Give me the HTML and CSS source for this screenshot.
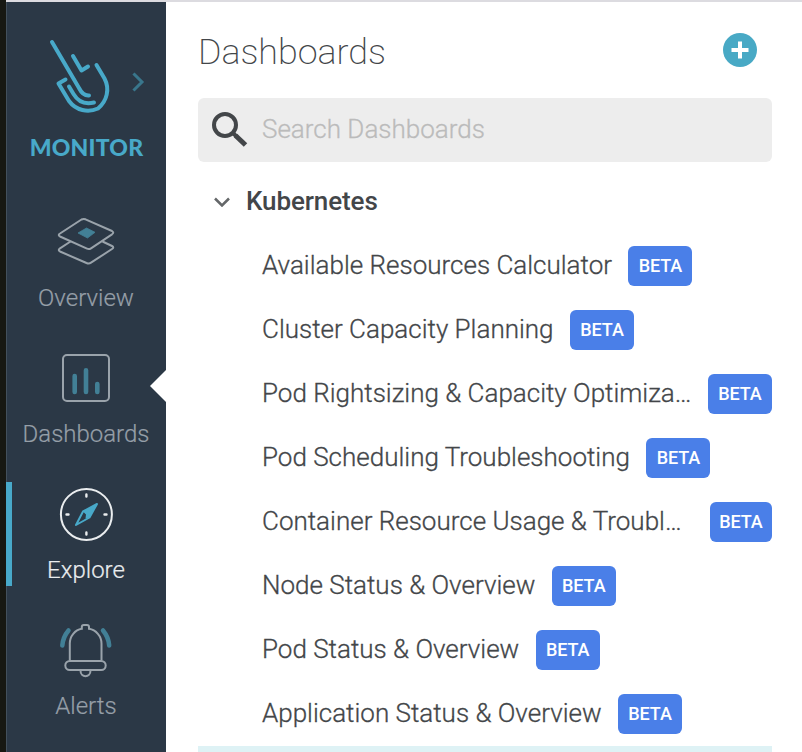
FILE: index.html
```html
<!DOCTYPE html>
<html lang="en">
<head>
<meta charset="utf-8">
<title>Dashboards</title>
<link rel="stylesheet" href="styles.css">
</head>
<body>
<div class="app">
  <nav class="sidebar">
    <div class="brand">
      <svg class="brand-art" width="159" height="134" viewBox="7 2 159 134" fill="none" stroke-linecap="round" stroke-linejoin="round">
        <g stroke="#48a9c9" stroke-width="4">
          <path d="M52 42 L79 88 Q83 96 89 95.500"/>
          <path d="M73 56 L81.500 70.500 L88 66.500"/>
          <path d="M96.500 65 L104.500 78.500 C110 89 107 101 98 108.500 C88 113 76 110.500 69 101 L58.500 83.500 L65.500 79.500"/>
          <path d="M69 86.500 L73.500 94 C78 101.500 84 105 94 102.500"/>
        </g>
        <path d="M134.500 74.500 L142 82 L134.500 89.500" stroke="#39768c" stroke-width="3" stroke-linecap="square" stroke-linejoin="miter"/>
      </svg>
      <span class="brand-name">MONITOR</span>
    </div>
    <a class="nav-item">
      <svg width="60" height="64" viewBox="56 210 60 64" fill="none" stroke="#9aa3ab" stroke-width="2" stroke-linejoin="round">
        <path d="M60 233.500 L81.500 219.500 Q83.500 218.500 85.500 219.300 L112 231 Q114.500 232.500 112 234.300 L91 248.300 Q89 249.600 87 248.700 L60 236.500 Q57.500 235 60 233.500Z"/>
        <path d="M70.500 241.500 L60 248.300 Q57.500 250 60 251.500 L86.500 263 Q89 264 91 262.700 L112 249 Q114.500 247.300 112 246 L102.500 241.500"/>
        <path d="M78 233 L86.500 228 L95 232.300 L87.500 238Z" fill="#428096" stroke="#428096" stroke-width=".8"/>
      </svg>
      <span>Overview</span>
    </a>
    <a class="nav-item nav-current">
      <svg width="60" height="64" viewBox="56 346 60 64" fill="none">
        <rect x="63" y="355" width="46" height="46" rx="4" stroke="#9aa3ab" stroke-width="2"/>
        <path d="M74.700 376V392M86 370.300V392M97.300 384V392" stroke="#428096" stroke-width="4.600" stroke-linecap="round"/>
      </svg>
      <span>Dashboards</span>
    </a>
    <a class="nav-item nav-active">
      <svg width="60" height="64" viewBox="56 482 60 64" fill="none">
        <circle cx="86.400" cy="514.400" r="25.500" stroke="#eaedef" stroke-width="2"/>
        <path d="M86.400 494.500V496.500M86.400 532.500V534.500M66.500 514.500H68.500M104.500 514.500H106.500" stroke="#eaedef" stroke-width="2.400" stroke-linecap="round"/>
        <path d="M97 504 L83 511.500 L76 525 L89.500 517.500Z" stroke="#48a9c9" stroke-width="2" stroke-linejoin="round"/>
        <path d="M97 504 L83 511.500 L86 514.500 L85.500 518.500 L89.500 517.500Z" fill="#48a9c9"/>
      </svg>
      <span>Explore</span>
    </a>
    <a class="nav-item">
      <svg width="60" height="64" viewBox="56 618 60 64" fill="none" stroke="#9aa3ab" stroke-width="2">
        <path d="M69.800 660.500V643.500C69.800 636 75 630 81.800 628.800V627Q81.800 625 83.800 625H87Q89 625 89 627V628.800C96 630 101.500 636 101.500 643.500V660.500"/>
        <rect x="65.300" y="661" width="40.400" height="9" rx="4.500"/>
        <path d="M80.500 670.500C80.500 678 90.500 678 90.500 670.500"/>
        <path d="M68.500 630.500Q63 637 62.300 645.500M103 630.500Q108.500 637 109.200 645.500" stroke="#428096" stroke-width="4.500" stroke-linecap="round"/>
      </svg>
      <span>Alerts</span>
    </a>
  </nav>
  <main class="panel">
    <header class="panel-head">
      <h1>Dashboards</h1>
      <svg class="add" width="34" height="34" viewBox="0 0 34 34"><circle cx="17" cy="17" r="17" fill="#48a9c5"/><path d="M17 8.500V25.500M8.500 17H25.500" stroke="#fff" stroke-width="4"/></svg>
    </header>
    <div class="search">
      <svg width="36" height="36" viewBox="0 0 36 36" fill="none" stroke="#434649"><circle cx="13" cy="13" r="11" stroke-width="4"/><path d="M21 21L24 24" stroke-width="4"/><path d="M23.500 23.500L33.500 33" stroke-width="5"/></svg>
      <span class="label">Search Dashboards</span>
    </div>
    <div class="group">
      <svg width="16" height="10" viewBox="0 0 16 10" fill="none" stroke="#646769" stroke-width="2.500"><path d="M1 1.500L8 8.500L15 1.500"/></svg>
      <span class="label">Kubernetes</span>
    </div>
    <ul class="list">
      <li><span class="name">Available Resources Calculator</span><span class="badge">BETA</span></li>
      <li><span class="name">Cluster Capacity Planning</span><span class="badge">BETA</span></li>
      <li><span class="name">Pod Rightsizing &amp; Capacity Optimiza…</span><span class="badge badge-end">BETA</span></li>
      <li><span class="name">Pod Scheduling Troubleshooting</span><span class="badge">BETA</span></li>
      <li><span class="name">Container Resource Usage &amp; Troubl…</span><span class="badge badge-end badge-narrow">BETA</span></li>
      <li><span class="name">Node Status &amp; Overview</span><span class="badge">BETA</span></li>
      <li><span class="name">Pod Status &amp; Overview</span><span class="badge">BETA</span></li>
      <li><span class="name">Application Status &amp; Overview</span><span class="badge">BETA</span></li>
    </ul>
    <div class="selected"></div>
  </main>
</div>
</body>
</html>
```
FILE: styles.css
```css
* { box-sizing: border-box; }
body { margin: 0; background: #171812; font-family: Roboto, sans-serif; }
.app { display: flex; width: 796px; height: 752px; margin-left: 6px; border-top: 2px solid #dcdbe0; background: #fff; overflow: hidden; }
.sidebar { width: 160px; flex: none; background: #2b3846; border-left: 1px solid #43505c; }
.brand { height: 208px; display: flex; flex-direction: column; align-items: center; }
.brand-art { display: block; flex: none; }
.brand-name { margin-top: -1px; font: 900 23px/24px Lato, sans-serif; color: #48a9c9; letter-spacing: .2px; white-space: nowrap; }
.nav-item { position: relative; display: flex; flex-direction: column; align-items: center; height: 104px; margin-bottom: 32px; margin-left: -1px; color: #969fa8; font-size: 24px; line-height: 28px; font-weight: 300; -webkit-text-stroke: .2px currentColor; }
.nav-item svg { flex: none; margin-bottom: 10px; }
.nav-active { color: #eaedef; }
.nav-active::before { content: ""; position: absolute; left: 0; top: 0; width: 6px; height: 104px; background: #48a9c9; }
.nav-current::after { content: ""; position: absolute; right: 0; top: 24px; border: 16px solid transparent; border-left-width: 0; border-right-color: #fff; }
.panel { flex: 1; min-width: 0; padding: 0 30px 0 32px; color: #434649; }
.panel-head { height: 96px; display: flex; align-items: center; justify-content: space-between; padding-right: 15px; }
h1 { margin: 3px 0 0; font-size: 35.8px; line-height: 44px; font-weight: 200; }
.search { height: 64px; display: flex; align-items: center; gap: 14px; padding-left: 14px; background: #ededed; border-radius: 6px; color: #bbb; font-size: 26px; font-weight: 300; -webkit-text-stroke: .3px currentColor; }
.group { height: 64px; margin-top: 8px; padding-left: 16px; display: flex; align-items: center; gap: 16px; font-size: 26px; font-weight: 500; letter-spacing: -.1px; }
.label { margin-bottom: 2px; }
.list { list-style: none; margin: 0; padding: 0 0 0 64px; }
.list li { height: 64px; display: flex; align-items: center; gap: 16.5px; }
.name { margin-bottom: 2px; font-size: 26px; line-height: 32px; font-weight: 300; -webkit-text-stroke: .3px currentColor; white-space: nowrap; }
.badge { flex: none; width: 64px; height: 40px; border-radius: 6px; background: #4a7fe8; color: #fff; font-size: 18px; line-height: 40px; font-weight: 500; letter-spacing: -.1px; text-align: center; }
.badge-end { margin-left: auto; }
.badge-narrow { width: 62px; }
.selected { height: 64px; background: #def2f5; }
```
